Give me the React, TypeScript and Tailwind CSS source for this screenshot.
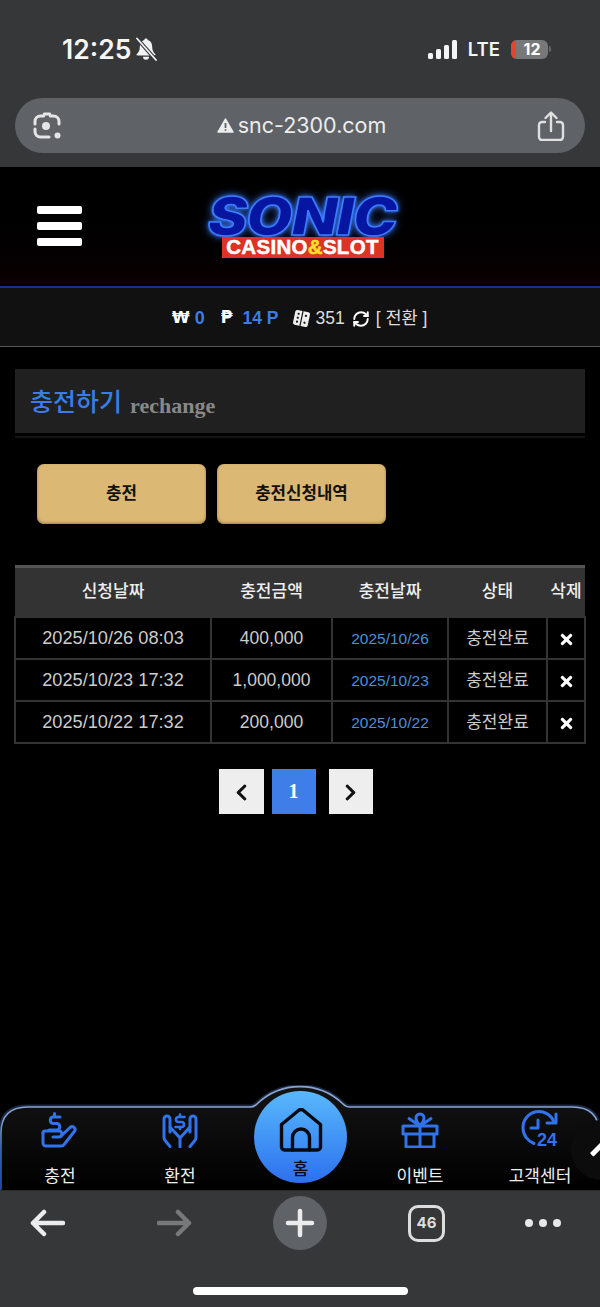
import React from "react";
import { FaTimes, FaChevronLeft, FaChevronRight } from "react-icons/fa";
import { RefreshCw } from "lucide-react";

const rows = [
  ["2025/10/26 08:03", "400,000", "2025/10/26"],
  ["2025/10/23 17:32", "1,000,000", "2025/10/23"],
  ["2025/10/22 17:32", "200,000", "2025/10/22"],
];

function BellSlash() {
  return (
    <svg width="24" height="24" viewBox="0 0 24 24" className="ml-[3px]">
      <path d="M12 1.500c-1 0-1.700.7-1.800 1.600C7.200 4 5.800 6.600 5.800 9.800c0 3.700-1.200 5.500-3 7.200-.6.6-.2 1.500.6 1.500h17.200c.8 0 1.200-.9.600-1.500-1.800-1.700-3-3.500-3-7.200 0-3.200-1.400-5.800-4.400-6.700-.1-.9-.8-1.600-1.800-1.600zM9 19.800a3 3 0 0 0 6 0z" fill="#f2f2f2" />
      <path d="M3 1.500 22 23" stroke="#363739" strokeWidth="3.800" />
      <path d="M3 1.500 22 23" stroke="#f2f2f2" strokeWidth="1.800" strokeLinecap="round" />
    </svg>
  );
}

function Lens() {
  return (
    <svg width="30" height="30" viewBox="0 0 30 30" fill="none" stroke="#e4e5e6" strokeWidth="3" strokeLinecap="round">
      <path d="M3 13v-2.500A5.500 5.500 0 0 1 8.500 5h3l1-2h5l1 2h3A5.500 5.500 0 0 1 27 10.500V13" />
      <path d="M3 18v2.500A5.500 5.500 0 0 0 8.500 26H17" />
      <circle cx="14" cy="15" r="4" fill="#e4e5e6" stroke="none" />
      <circle cx="25.500" cy="24.500" r="3" fill="#e4e5e6" stroke="none" />
    </svg>
  );
}

function Share() {
  return (
    <svg width="28" height="30" viewBox="0 0 28 30" fill="none" stroke="#dfe0e1" strokeWidth="2.400" strokeLinecap="round" strokeLinejoin="round">
      <path d="M8 11H5a3 3 0 0 0-3 3v12a3 3 0 0 0 3 3h18a3 3 0 0 0 3-3V14a3 3 0 0 0-3-3h-3" />
      <path d="M14 20V2M8.500 7 14 1.500 19.500 7" />
    </svg>
  );
}

function ChargeIcon() {
  return (
    <svg width="40" height="36" viewBox="0 0 40 36" fill="none" stroke="#2f74ec" strokeWidth="3" strokeLinecap="round" strokeLinejoin="round">
      <path d="M20 5h-7a3.300 3.300 0 0 0 0 6.500h4a3.300 3.300 0 0 1 0 6.500H9M14.500 1.500V5" />
      <path d="M3 21a2 2 0 0 1 2-2h14a3 3 0 0 1 0 6h-6" />
      <path d="M21 24l9-8.500c2.800-2.300 6.500.7 4.500 3.800L24.500 32a4 4 0 0 1-3.200 2H6a3 3 0 0 1-3-3V21" />
    </svg>
  );
}

function ExchangeIcon() {
  return (
    <svg width="36" height="36" viewBox="0 0 36 36" fill="none" stroke="#2f74ec" strokeWidth="3" strokeLinecap="round" strokeLinejoin="round">
      <path d="M8 34.500 3.500 29A5 5 0 0 1 2 25.500V7a3 3 0 0 1 6 0v7.500" />
      <path d="M28 34.500 32.500 29a5 5 0 0 0 1.500-3.500V7a3 3 0 0 0-6 0v7.500" />
      <path d="M8 15l10 11 10-11M18 26v9M8 15v5M28 15v5" />
      <path d="M22.500 5h-6a2.500 2.500 0 0 0 0 5h3a2.500 2.500 0 0 1 0 5h-6M18 2.500V5M18 15v2" strokeWidth="2.600" />
    </svg>
  );
}

function GiftIcon() {
  return (
    <svg width="38" height="36" viewBox="0 0 38 36" fill="none" stroke="#2f74ec" strokeWidth="3" strokeLinejoin="round" strokeLinecap="round">
      <path d="M2 14h34v8H2zM5 22h28v13H5zM19 14v21" />
      <path d="M19 14c-3-3-4-6-4-8a4 4 0 0 1 8 0c0 2-1 5-4 8zM19 14 8 6.500M19 14 30 6.500" />
    </svg>
  );
}

function ClockIcon() {
  return (
    <svg width="38" height="38" viewBox="0 0 38 38" fill="none" stroke="#2f74ec" strokeWidth="3" strokeLinejoin="round" strokeLinecap="round" className="overflow-visible">
      <path d="M33 11A16 16 0 0 0 2 17c0 7 4.500 13 11 15.500" />
      <path d="M35 3v9H26" />
      <path d="M17 9v8h-7" />
      <text x="16" y="35" fontSize="18" fontWeight="700" fill="#2f74ec" stroke="none" className="[font-family:'Liberation_Sans',sans-serif]">24</text>
    </svg>
  );
}

function HomeIcon() {
  return (
    <svg width="44" height="44" viewBox="0 0 44 44" fill="none" stroke="#070a12" strokeWidth="3.400" strokeLinejoin="round" strokeLinecap="round">
      <path d="M2.500 16.500 19.500 2.500a3.500 3.500 0 0 1 5 0L41.500 16.500V39a3 3 0 0 1-3 3h-33a3 3 0 0 1-3-3z" />
      <path d="M13.500 42V29.500a8.500 8.500 0 0 1 17 0V42" />
    </svg>
  );
}

function Dice() {
  return (
    <svg width="17" height="17" viewBox="0 0 17 17" className="rotate-[12deg]">
      <rect x="1" y="1" width="15" height="15" rx="2" fill="#eee" />
      <path d="M8.500 1v15" stroke="#111" strokeWidth="1.200" />
      <g fill="#111">
        <circle cx="4.700" cy="4.500" r="1.100" /><circle cx="4.700" cy="8.500" r="1.100" /><circle cx="4.700" cy="12.500" r="1.100" />
        <circle cx="12.300" cy="5" r="1.100" /><circle cx="12.300" cy="12" r="1.100" />
      </g>
    </svg>
  );
}

function NavItem({ icon, label }: { icon: React.ReactNode; label: string }) {
  return (
    <div className="flex flex-col items-center">
      <div className="h-[36px] flex items-center justify-center">{icon}</div>
      <span className="mt-[19px] text-[17px] leading-[20px] text-[#eeeeee]">{label}</span>
    </div>
  );
}

const outlineTop = "Q1 22 28 22H250Q254 22 257 19A62 62 0 0 1 343 19Q346 22 350 22H572Q599 22 599 48";

export default function App() {
  return (
    <div className="w-[600px] h-[1307px] flex flex-col overflow-hidden bg-black [font-family:'Liberation_Sans','Noto_Sans_CJK_KR',sans-serif]">
      {/* browser top */}
      <div className="h-[167px] shrink-0 bg-[#363739] px-[15px] flex flex-col">
        <div className="h-[98px] flex items-center justify-between">
          <div className="flex items-center ml-[47px]">
            <span className="text-[26.500px] leading-none font-semibold text-[#f5f5f5] [font-family:Inter,sans-serif]">12:25</span>
            <BellSlash />
          </div>
          <div className="flex items-center mr-[34px]">
            <div className="flex items-end gap-[3px] h-[19px]">
              <span className="w-[5px] h-[6px] rounded-[1.500px] bg-[#f5f5f5]" />
              <span className="w-[5px] h-[10px] rounded-[1.500px] bg-[#f5f5f5]" />
              <span className="w-[5px] h-[14px] rounded-[1.500px] bg-[#f5f5f5]" />
              <span className="w-[5px] h-[19px] rounded-[1.500px] bg-[#f5f5f5]" />
            </div>
            <span className="ml-[11px] text-[18.500px] leading-none font-semibold text-[#f5f5f5] [font-family:Inter,sans-serif]">LTE</span>
            <div className="ml-[11px] w-[37px] h-[19px] rounded-[6px] overflow-hidden bg-[#77787a] flex">
              <span className="w-[5px] bg-[#e8432e]" />
              <span className="flex-1 text-center text-[16px] leading-[19px] font-bold text-white [font-family:Inter,sans-serif]">12</span>
            </div>
            <span className="ml-[1px] w-[2px] h-[6px] rounded-r-sm bg-[#66676a]" />
          </div>
        </div>
        <div className="h-[55px] rounded-full bg-[#5f6266] pl-[17px] pr-[20px] flex items-center justify-between">
          <Lens />
          <div className="flex items-center gap-[4px] ml-[4px] text-[#eceded]">
            <svg width="17" height="15" viewBox="0 0 17 15"><path d="M8.500 1 16 14H1z" fill="#eceded" stroke="#eceded" strokeWidth="1.500" strokeLinejoin="round" /><path d="M8.500 5v5M8.500 11.200v1.500" stroke="#5f6266" strokeWidth="1.800" /></svg>
            <span className="text-[21.500px] leading-none [font-family:Inter,sans-serif]">snc-2300.com</span>
          </div>
          <Share />
        </div>
      </div>

      {/* site header */}
      <header className="h-[121px] shrink-0 border-b-2 border-[#1a2f8a] bg-gradient-to-b from-black to-[#0a0002] flex items-center pl-[37px]">
        <div className="flex flex-col gap-[8px] -mt-[1px]">
          <span className="block w-[45px] h-[8px] rounded-[2px] bg-white" />
          <span className="block w-[45px] h-[8px] rounded-[2px] bg-white" />
          <span className="block w-[45px] h-[8px] rounded-[2px] bg-white" />
        </div>
        <div className="ml-[125px] mt-[1px] w-[191px] flex flex-col items-center">
          <span className="block whitespace-nowrap text-[52px] leading-[40px] font-black italic tracking-[-1px] text-[#0616a0] [font-family:Inter,sans-serif] [transform:scaleX(1.15)] [-webkit-text-stroke:1.500px_#3a7dff] [text-shadow:0_0_9px_#3a78ff,0_0_4px_#3a78ff]">SONIC</span>
          <div className="relative w-[162px] h-[21px] bg-[#dc3324] flex items-center justify-center text-[20.500px] leading-none font-bold tracking-[0.300px] text-white [-webkit-text-stroke:0.500px_#ffffff]">
            CASINO<span className="text-[#f8e02a] [-webkit-text-stroke:0.500px_#f8e02a]">&amp;</span>SLOT
          </div>
        </div>
      </header>

      {/* balance bar */}
      <div className="h-[59px] shrink-0 bg-[#111111] border-b border-[#555555] flex items-center pl-[172px] pt-[2px] text-[17px] text-[#dddddd]">
        <span className="font-bold text-white [font-family:'DejaVu_Sans',sans-serif] text-[16px]">₩</span>
        <span className="ml-[5px] text-[18px] font-bold text-[#3b7de0]">0</span>
        <span className="ml-[16px] font-bold text-white [font-family:'DejaVu_Sans',sans-serif] text-[17px]">₱</span>
        <span className="ml-[10px] text-[17.500px] font-bold text-[#3b7de0]">14 P</span>
        <span className="ml-[14px] flex"><Dice /></span>
        <span className="ml-[6px] text-[17.500px]">351</span>
        <RefreshCw className="ml-[7px] mt-[2px] text-white" size={18} strokeWidth={2.600} />
        <span className="ml-[6px] text-[17.500px]">[ 전환 ]</span>
      </div>

      {/* main */}
      <main className="flex-1 min-h-0 px-[15px] pt-[22px]">
        <div className="h-[64px] bg-[#202020] pl-[15px] flex items-center pt-[4px]">
          <span className="text-[25px] font-medium text-[#3b7de8]">충전하기</span>
          <span className="ml-[8px] mt-[4px] text-[22px] font-bold text-[#888888] [font-family:'Liberation_Serif',serif]">rechange</span>
        </div>
        <div className="mt-[3px] h-[2px] bg-[#141414]" />
        <div className="mt-[26px] pl-[22px] flex gap-[11px]">
          <button className="w-[169px] h-[60px] rounded-[7px] bg-[#dbb874] text-[16.800px] font-bold text-[#111111] shadow-[inset_0_-1px_3px_#9c8046]">충전</button>
          <button className="w-[169px] h-[60px] rounded-[7px] bg-[#dbb874] text-[16.800px] font-bold text-[#111111] shadow-[inset_0_-1px_3px_#9c8046]">충전신청내역</button>
        </div>
        <table className="mt-[41px] -ml-[1px] w-[570px] table-fixed border-collapse">
          <colgroup>
            <col className="w-[196px]" /><col className="w-[121px]" /><col className="w-[116px]" /><col className="w-[99px]" /><col className="w-[38px]" />
          </colgroup>
          <thead>
            <tr className="h-[50px] bg-[#333333] border-t-[3px] border-[#555555] text-[17px] text-[#eeeeee]">
              <th className="font-medium">신청날짜</th>
              <th className="font-medium">충전금액</th>
              <th className="font-medium">충전날짜</th>
              <th className="font-medium">상태</th>
              <th className="font-medium">삭제</th>
            </tr>
          </thead>
          <tbody>
            {rows.map((r) => (
              <tr key={r[0]} className="h-[42px]">
                <td className="border-2 border-[#333333] pt-[2px] text-center text-[18.200px] text-[#cccccc]">{r[0]}</td>
                <td className="border-2 border-[#333333] pt-[2px] text-center text-[17.500px] text-[#cccccc]">{r[1]}</td>
                <td className="border-2 border-[#333333] pt-[2px] text-center text-[15.500px] text-[#4a90d8]">{r[2]}</td>
                <td className="border-2 border-[#333333] pt-[2px] text-center text-[17px] text-[#cccccc]">충전완료</td>
                <td className="border-2 border-[#333333]"><FaTimes className="mx-auto mt-[3px] text-white" size={17} /></td>
              </tr>
            ))}
          </tbody>
        </table>
        <div className="mt-[25px] flex justify-center pr-[9px]">
          <button className="w-[45px] h-[45px] bg-[#eeeeee] flex items-center justify-center text-[#111111]"><FaChevronLeft size={19} className="mt-[3px]" /></button>
          <button className="ml-[8px] w-[44px] h-[45px] bg-[#3f7de8] text-[20px] font-bold text-white [font-family:'Liberation_Serif',serif]">1</button>
          <button className="ml-[13px] w-[44px] h-[45px] bg-[#eeeeee] flex items-center justify-center text-[#111111]"><FaChevronRight size={19} className="mt-[3px]" /></button>
        </div>
      </main>

      {/* bottom nav */}
      <nav className="relative h-[105px] shrink-0 overflow-hidden">
        <svg width="600" height="105" viewBox="0 0 600 105" className="absolute inset-0">
          <defs>
            <linearGradient id="navbg" x1="0" y1="0" x2="0" y2="1"><stop offset="0" stopColor="#141414" /><stop offset="1" stopColor="#000" /></linearGradient>
            <linearGradient id="navline" x1="0" y1="0" x2="0" y2="1"><stop offset="0.3" stopColor="#86a3d2" /><stop offset="0.6" stopColor="#3f6cc4" /><stop offset="1" stopColor="#1f4fbf" /></linearGradient>
          </defs>
          <path d={`M1 105V48${outlineTop}V60`} fill="none" stroke="#33507f" strokeWidth="5" opacity="0.5" />
          <path d={`M1 105V48${outlineTop}V105Z`} fill="url(#navbg)" />
          <path d={`M1 105V48${outlineTop}V60`} fill="none" stroke="url(#navline)" strokeWidth="1.600" />
        </svg>
        <div className="relative grid grid-cols-5 pt-[27px] h-full">
          <NavItem icon={<ChargeIcon />} label="충전" />
          <NavItem icon={<ExchangeIcon />} label="환전" />
          <div />
          <NavItem icon={<GiftIcon />} label="이벤트" />
          <NavItem icon={<ClockIcon />} label="고객센터" />
        </div>
        <div className="absolute left-[254px] top-[6px] w-[93px] h-[92px] rounded-full bg-gradient-to-b from-[#5ab8fb] to-[#2f6fee] flex flex-col items-center pt-[17px]">
          <HomeIcon />
          <span className="mt-[8px] text-[17px] leading-[20px] font-medium text-[#070a12]">홈</span>
        </div>
        <div className="absolute left-[571px] top-[35px] w-[60px] h-[60px] rounded-full bg-[#0c0c0c]">
          <span className="absolute left-[18px] top-[26px] w-[18px] h-[5px] rounded-[1px] bg-white -rotate-45" />
        </div>
      </nav>

      {/* browser bottom */}
      <div className="relative h-[117px] shrink-0 bg-[#363739] border-t border-[#2a2a2b]">
        <div className="h-[64px] flex items-center pl-[30px]">
          <svg width="35" height="28" viewBox="0 0 35 28" fill="none" stroke="#ececec" strokeWidth="4.500" strokeLinecap="round" strokeLinejoin="round"><path d="M33 14H3M14 3 3 14l11 11" /></svg>
          <svg width="35" height="28" viewBox="0 0 35 28" fill="none" stroke="#78797b" strokeWidth="4.500" strokeLinecap="round" strokeLinejoin="round" className="ml-[92px]"><path d="M2 14h30M21 3l11 11-11 11" /></svg>
          <div className="ml-[81px] w-[54px] h-[54px] rounded-full bg-[#5f6266] flex items-center justify-center">
            <svg width="30" height="30" viewBox="0 0 30 30" stroke="#ececec" strokeWidth="4.500" strokeLinecap="round"><path d="M15 3v24M3 15h24" /></svg>
          </div>
          <div className="ml-[81px] w-[37px] h-[37px] rounded-[10px] border-[3px] border-[#dddddd] flex items-center justify-center text-[15px] font-bold text-[#dddddd] [font-family:Inter,sans-serif]">46</div>
          <div className="ml-[80px] flex gap-[6px]">
            <span className="w-[8px] h-[8px] rounded-full bg-[#e8e8e8]" />
            <span className="w-[8px] h-[8px] rounded-full bg-[#e8e8e8]" />
            <span className="w-[8px] h-[8px] rounded-full bg-[#e8e8e8]" />
          </div>
        </div>
        <div className="mt-[32px] ml-[193px] w-[215px] h-[8px] rounded-full bg-white" />
      </div>
    </div>
  );
}
